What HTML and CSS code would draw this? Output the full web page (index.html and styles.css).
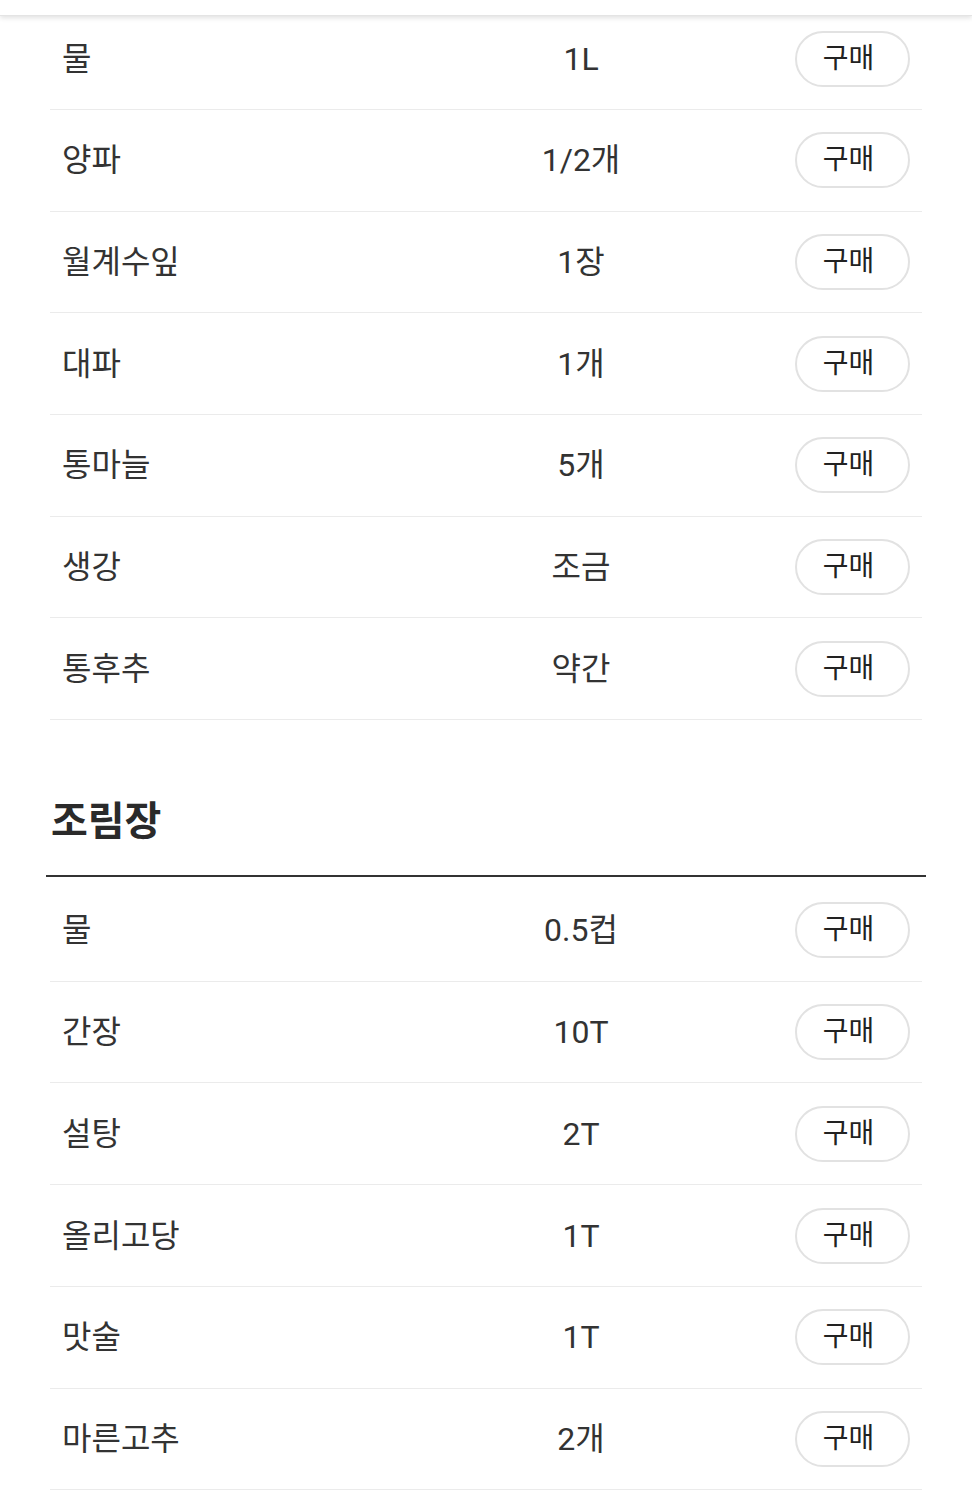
FILE: index.html
```html
<!DOCTYPE html>
<html lang="ko">
<head>
<meta charset="utf-8">
<link rel="stylesheet" href="styles.css">
</head>
<body>
<div class="topbar"></div>
<main class="page">
  <ul class="list list-first">
    <li class="row"><span class="name">물</span><span class="amount">1L</span><button class="buy">구매</button></li>
    <li class="row"><span class="name">양파</span><span class="amount">1/2개</span><button class="buy">구매</button></li>
    <li class="row"><span class="name">월계수잎</span><span class="amount">1장</span><button class="buy">구매</button></li>
    <li class="row"><span class="name">대파</span><span class="amount">1개</span><button class="buy">구매</button></li>
    <li class="row"><span class="name">통마늘</span><span class="amount">5개</span><button class="buy">구매</button></li>
    <li class="row"><span class="name">생강</span><span class="amount">조금</span><button class="buy">구매</button></li>
    <li class="row"><span class="name">통후추</span><span class="amount">약간</span><button class="buy">구매</button></li>
  </ul>
  <section class="group">
    <h2 class="group-title">조림장</h2>
    <ul class="list list-group">
      <li class="row"><span class="name">물</span><span class="amount">0.5컵</span><button class="buy">구매</button></li>
      <li class="row"><span class="name">간장</span><span class="amount">10T</span><button class="buy">구매</button></li>
      <li class="row"><span class="name">설탕</span><span class="amount">2T</span><button class="buy">구매</button></li>
      <li class="row"><span class="name">올리고당</span><span class="amount">1T</span><button class="buy">구매</button></li>
      <li class="row"><span class="name">맛술</span><span class="amount">1T</span><button class="buy">구매</button></li>
      <li class="row"><span class="name">마른고추</span><span class="amount">2개</span><button class="buy">구매</button></li>
    </ul>
  </section>
</main>
</body>
</html>
```

FILE: styles.css
```css
* { box-sizing: border-box; }
html, body { margin: 0; padding: 0; background: #fff; }
body {
  font-family: Roboto, "Noto Sans CJK KR", sans-serif;
  color: #333;
  width: 972px;
  overflow: hidden;
}
.topbar {
  position: fixed;
  top: 0; left: 0; right: 0;
  height: 16px;
  background: #fff;
  border-bottom: 1px solid #e4e4e4;
  box-shadow: 0 2px 5px rgba(0,0,0,0.12);
  z-index: 10;
}
.page {
  padding: 8.3px 46px 0;
}
.list {
  list-style: none;
  margin: 0;
  padding: 0 4px;
}
.row {
  height: 101.7px;
  display: grid;
  grid-template-columns: 305px 1fr 115px;
  align-items: center;
  padding: 0 12px;
  border-bottom: 1px solid #ebebeb;
}
.name {
  font-size: 32px;
  line-height: 40px;
  padding-bottom: 0;
  color: #333;
}
.amount {
  font-size: 32px;
  line-height: 40px;
  padding-bottom: 0;
  text-align: center;
  color: #333;
}
.buy {
  width: 115px;
  height: 56px;
  border: 2px solid #e2e2e2;
  border-radius: 28px;
  background: #fff;
  font-family: inherit;
  font-size: 28px;
  color: #222;
  padding: 0 8px 0 0;
  line-height: 1;
}
.group {
  margin-top: 77px;
}
.group-title {
  margin: 0;
  padding: 0 5px 28px;
  font-size: 40px;
  line-height: 50px;
  font-weight: 700;
  color: #2a2a2a;
  border-bottom: 2px solid #333;
}
.list-group {
  padding-top: 3px;
}
```
